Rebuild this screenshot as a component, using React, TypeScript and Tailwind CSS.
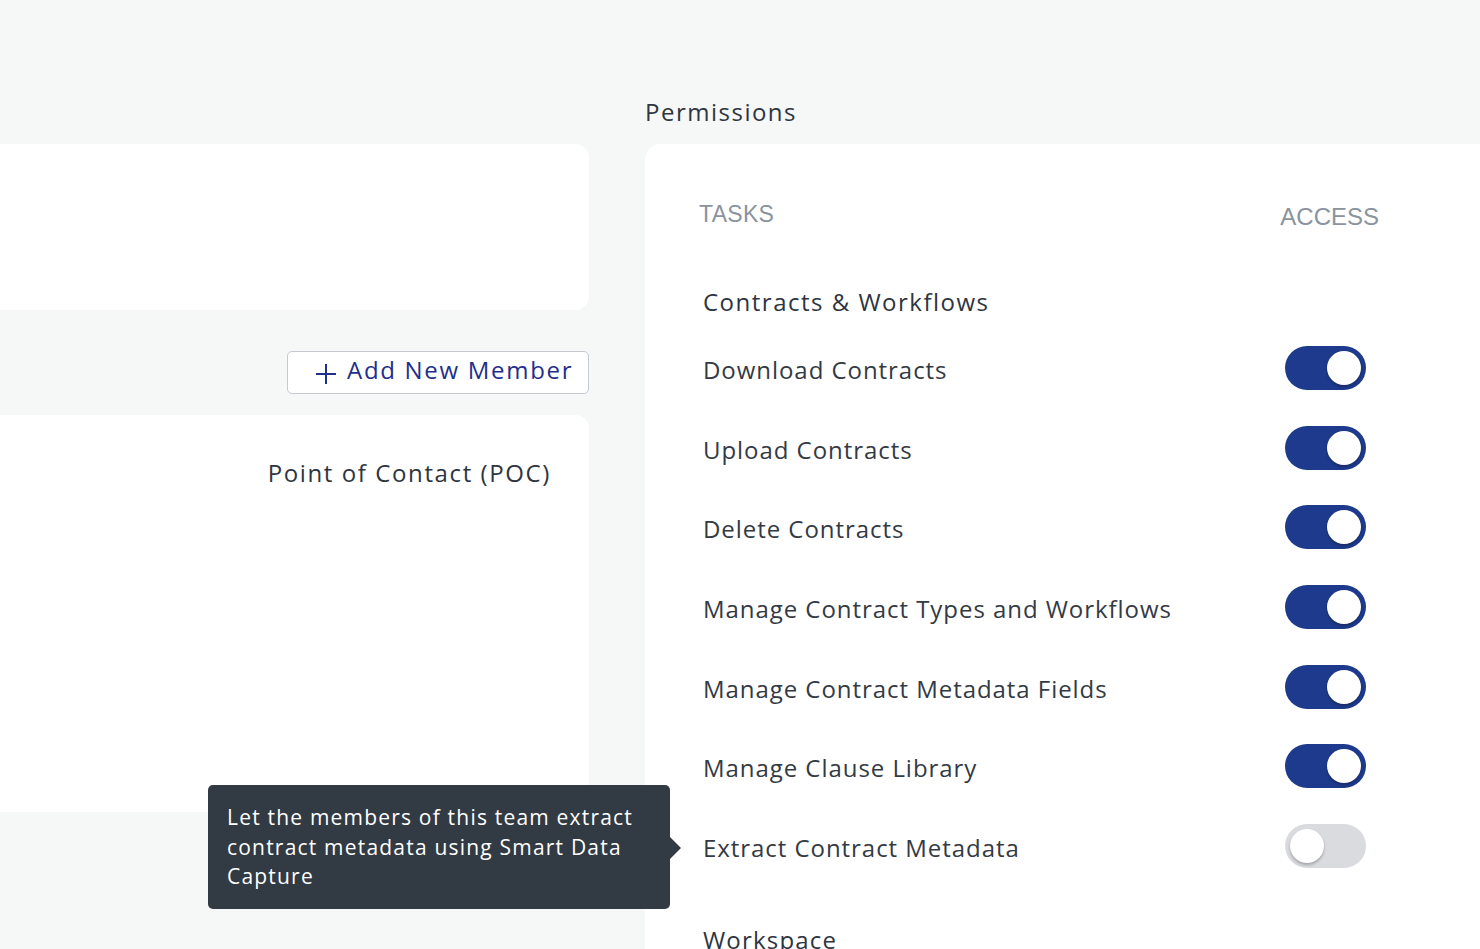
import React from 'react';

const rows: { label: string; on: boolean }[] = [
  { label: 'Download Contracts', on: true },
  { label: 'Upload Contracts', on: true },
  { label: 'Delete Contracts', on: true },
  { label: 'Manage Contract Types and Workflows', on: true },
  { label: 'Manage Contract Metadata Fields', on: true },
  { label: 'Manage Clause Library', on: true },
  { label: 'Extract Contract Metadata', on: false },
];

const Toggle: React.FC<{ on: boolean }> = ({ on }) => (
  <div
    className={`-mt-[4px] w-[81px] h-[44px] rounded-full p-[5px] flex items-center ${
      on ? 'bg-[#1e3a8c] justify-end' : 'bg-[#d9dbde] justify-start'
    }`}
  >
    <div className="w-[34px] h-[34px] rounded-full bg-white shadow-[0_2px_3px_rgba(0,0,0,0.25)]" />
  </div>
);

const App: React.FC = () => {
  return (
    <div
      className="relative h-[949px] w-[1480px] overflow-hidden bg-[#f6f7f7] text-[#2e3540]"
      style={{ fontFamily: '"Open Sans", "Noto Sans", sans-serif' }}
    >
      <div className="flex">
        {/* left column */}
        <div className="w-[589px] shrink-0 pt-[144px]">
          <div className="h-[166px] bg-white rounded-r-[14px]" />
          <div className="flex justify-end mt-[41px]">
            <button className="h-[43px] w-[302px] flex items-center gap-[10px] pl-[27px] bg-white border-[1.5px] border-[#c5c9d0] rounded-[5px] text-[#1f2f8c] text-[24px] tracking-[1.7px]">
              <svg width="22" height="22" viewBox="0 0 22 22" className="mt-[2px]">
                <path d="M11 1v20M1 11h20" stroke="#1f2f8c" strokeWidth="2" />
              </svg>
              <span className="-mt-[5px]">Add New Member</span>
            </button>
          </div>
          <div className="mt-[21px] h-[397px] bg-white rounded-r-[14px] pt-[40px] pr-[38px] flex justify-end items-start">
            <span className="text-[24px] leading-[36px] tracking-[1.6px]">Point of Contact (POC)</span>
          </div>
        </div>

        {/* right column */}
        <div className="ml-[56px] pt-[96px] shrink-0">
          <div className="h-[32px] text-[24px] leading-[32px] tracking-[1.5px] mb-[16px]">Permissions</div>
          <div className="w-[900px] h-[900px] bg-white rounded-tl-[16px] pl-[54px] pt-[56px]">
            <div
              className="w-[680px] h-[28px] flex justify-between items-center text-[#8a939e] text-[23px]"
              style={{ fontFamily: '"Liberation Sans", Arial, sans-serif' }}
            >
              <span className="tracking-[0.3px]">TASKS</span>
              <span className="mt-[6px] text-[24px]">ACCESS</span>
            </div>
            <div className="pl-[4px] mt-[54px] h-[40px] flex items-center text-[24px] tracking-[1.5px]">
              Contracts &amp; Workflows
            </div>
            <div className="mt-[8px] w-[680px]">
              {rows.map((r) => (
                <div key={r.label} className="h-[79.7px] flex items-center justify-between pl-[4px] pr-[13px]">
                  <span className="text-[24px] tracking-[0.95px] text-[#333a44]">{r.label}</span>
                  <Toggle on={r.on} />
                </div>
              ))}
            </div>
            <div className="pl-[4px] mt-[32px] h-[40px] flex items-center text-[24px] tracking-[1.2px]">
              Workspace
            </div>
          </div>
        </div>
      </div>

      {/* tooltip */}
      <div className="absolute left-[208px] top-[785px] w-[462px] h-[124px] bg-[#323a43] rounded-[5px] pl-[19px] pr-[10px] pt-[18px] text-white text-[21px] leading-[29.5px] tracking-[1.2px]">
        Let the members of this team extract contract metadata using Smart Data Capture
        <div className="absolute right-[-11px] top-[52px] w-0 h-0 border-y-[11px] border-y-transparent border-l-[11px] border-l-[#323a43]" />
      </div>
    </div>
  );
};

export default App;
